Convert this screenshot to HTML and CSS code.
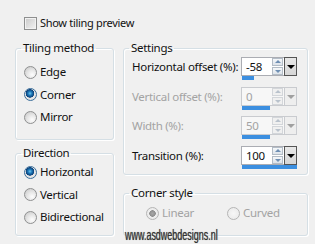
FILE: index.html
```html
<!DOCTYPE html>
<html lang="en">
<head>
    <meta charset="UTF-8">
    <meta name="viewport" content="width=device-width, initial-scale=1.0">
    <title>Tiling settings</title>
    <link rel="stylesheet" href="styles.css">
</head>
<body>
    <div class="dialog">
        <label class="check-row">
            <input type="checkbox" class="check">
            <span>Show tiling preview</span>
        </label>

        <div class="panes">
            <div class="col-left">
                <fieldset class="group group-tiling">
                    <legend>Tiling method</legend>
                    <label class="opt"><input type="radio" name="method" class="radio"><span>Edge</span></label>
                    <label class="opt"><input type="radio" name="method" class="radio" checked><span>Corner</span></label>
                    <label class="opt"><input type="radio" name="method" class="radio"><span>Mirror</span></label>
                </fieldset>

                <fieldset class="group group-direction">
                    <legend>Direction</legend>
                    <label class="opt"><input type="radio" name="direction" class="radio" checked><span>Horizontal</span></label>
                    <label class="opt"><input type="radio" name="direction" class="radio"><span>Vertical</span></label>
                    <label class="opt"><input type="radio" name="direction" class="radio"><span>Bidirectional</span></label>
                </fieldset>
            </div>

            <div class="col-right">
                <fieldset class="group group-settings">
                    <legend>Settings</legend>

                    <div class="setting">
                        <span class="setting-label">Horizontal offset (%):</span>
                        <div class="spin">
                            <div class="spin-field">
                                <span class="spin-value">-58</span>
                                <span class="spin-arrows"><span class="arrow up"></span><span class="arrow down"></span></span>
                                <span class="spin-drop"></span>
                            </div>
                            <div class="spin-track"><div class="spin-fill" style="width: 21%"></div></div>
                        </div>
                    </div>

                    <div class="setting disabled">
                        <span class="setting-label">Vertical offset (%):</span>
                        <div class="spin">
                            <div class="spin-field">
                                <span class="spin-value">0</span>
                                <span class="spin-arrows"><span class="arrow up"></span><span class="arrow down"></span></span>
                                <span class="spin-drop"></span>
                            </div>
                            <div class="spin-track"><div class="spin-fill" style="width: 50%"></div></div>
                        </div>
                    </div>

                    <div class="setting disabled">
                        <span class="setting-label">Width (%):</span>
                        <div class="spin">
                            <div class="spin-field">
                                <span class="spin-value">50</span>
                                <span class="spin-arrows"><span class="arrow up"></span><span class="arrow down"></span></span>
                                <span class="spin-drop"></span>
                            </div>
                            <div class="spin-track"><div class="spin-fill" style="width: 50%"></div></div>
                        </div>
                    </div>

                    <div class="setting">
                        <span class="setting-label">Transition (%):</span>
                        <div class="spin">
                            <div class="spin-field">
                                <span class="spin-value">100</span>
                                <span class="spin-arrows"><span class="arrow up"></span><span class="arrow down"></span></span>
                                <span class="spin-drop"></span>
                            </div>
                            <div class="spin-track"><div class="spin-fill" style="width: 100%"></div></div>
                        </div>
                    </div>
                </fieldset>

                <fieldset class="group group-corner">
                    <legend>Corner style</legend>
                    <div class="corner-opts">
                        <label class="opt disabled"><input type="radio" name="corner" class="radio" checked disabled><span>Linear</span></label>
                        <label class="opt disabled"><input type="radio" name="corner" class="radio" disabled><span>Curved</span></label>
                    </div>
                </fieldset>
            </div>
        </div>

        <div class="watermark">www.asdwebdesigns.nl</div>
    </div>
</body>
</html>
```

FILE: styles.css
```css
body {
    margin: 0;
    padding: 0;
    background-color: #f0f0f0;
    font-family: "Noto Sans", "Open Sans", sans-serif;
    font-size: 11px;
    letter-spacing: -0.3px;
    color: #111;
}

.dialog {
    position: relative;
    height: 244px;
    padding: 16px 7px 0 15px;
    box-sizing: border-box;
}

/* checkbox row */
.check-row {
    display: flex;
    align-items: center;
    gap: 3px;
    height: 14px;
    padding-left: 9px;
    line-height: 14px;
}

.check {
    appearance: none;
    margin: 0;
    width: 13px;
    height: 13px;
    border: 1px solid #8e8f8f;
    box-sizing: border-box;
    background: linear-gradient(135deg, #c9c9c9, #f4f4f4);
    box-shadow: inset 0 0 0 1px #f2f2f2;
}

.panes {
    display: flex;
    gap: 9px;
    margin-top: 11px;
}

.col-left {
    width: 99px;
    display: flex;
    flex-direction: column;
    gap: 6px;
}

.col-right {
    width: 185px;
    display: flex;
    flex-direction: column;
    gap: 11px;
}

/* group boxes */
.group {
    margin: 0;
    min-width: 0;
    box-sizing: border-box;
    border: 1px solid #d5dfe5;
    border-radius: 3px;
    box-shadow: inset 1px 1px 0 #fff, 1px 1px 0 #fff;
    padding: 0 8px;
}

.group legend {
    padding: 0 2px;
    margin-left: -3px;
    line-height: 14px;
    font-size: 11.5px;
    color: #111;
}

.group-tiling {
    height: 99px;
    padding-top: 9px;
    display: flex;
    flex-direction: column;
    gap: 6.5px;
}

.group-direction {
    height: 90px;
    padding-top: 4px;
    display: flex;
    flex-direction: column;
    gap: 6.5px;
}

.group-settings {
    height: 134px;
    padding: 2px 10px 0 8px;
    display: flex;
    flex-direction: column;
    gap: 6.6px;
}

.group-corner {
    height: 50px;
    padding-top: 5px;
}

/* radio options */
.opt {
    display: flex;
    align-items: center;
    gap: 3px;
    height: 16px;
    line-height: 16px;
    font-size: 11.5px;
}

.opt.disabled {
    color: #a3a3a3;
}

.radio {
    appearance: none;
    margin: 0;
    width: 13px;
    height: 13px;
    border-radius: 50%;
    border: 1px solid #8f9091;
    box-sizing: border-box;
    background: radial-gradient(circle at 65% 70%, #fdfdfd 0%, #e6e6e6 45%, #c4c4c4 100%);
}

.radio:checked {
    border-color: #3c6f9b;
    background:
        radial-gradient(circle at 45% 40%, #6fc5ef 0, #1c78b8 2px, #0b3f78 4px, transparent 4.5px),
        radial-gradient(circle, #f4f4f4 0%, #dadada 100%);
}

.radio:disabled {
    border-color: #b5b5b5;
    background: radial-gradient(circle, #f7f7f7 0%, #e8e8e8 100%);
}

.radio:checked:disabled {
    background:
        radial-gradient(circle, #a8a8a8 0, #8f8f8f 3px, transparent 3.5px),
        radial-gradient(circle, #f7f7f7 0%, #e6e6e6 100%);
}

.corner-opts {
    display: grid;
    grid-template-columns: 81px 1fr;
    padding-left: 14px;
}

/* settings rows with spin boxes */
.setting {
    display: flex;
    justify-content: space-between;
    align-items: flex-start;
}

.setting-label {
    line-height: 19px;
    font-size: 11.5px;
}

.setting.disabled .setting-label,
.setting.disabled .spin-value {
    color: #a3a3a3;
}

.spin {
    width: 56px;
}

.spin-field {
    display: flex;
    height: 19px;
}

.spin-value {
    flex: 1;
    display: flex;
    align-items: center;
    padding-left: 4px;
    background: #fff;
    border: 1px solid #abadb3;
    border-right: none;
    font-size: 11.5px;
}

.spin-arrows {
    display: flex;
    flex-direction: column;
    justify-content: center;
    gap: 1px;
    width: 11px;
    background: #fff;
    border-top: 1px solid #abadb3;
    border-bottom: 1px solid #abadb3;
    padding-right: 1px;
}

.arrow {
    position: relative;
    height: 7px;
    border: 1px solid #b3bcc6;
    background: linear-gradient(#f6f8fa, #dde3ea);
}

.arrow::after {
    content: "";
    position: absolute;
    left: 2px;
    top: 1px;
    border-left: 3px solid transparent;
    border-right: 3px solid transparent;
}

.arrow.up::after {
    border-bottom: 3px solid #6f8fb3;
}

.arrow.down::after {
    top: 2px;
    border-top: 3px solid #6f8fb3;
}

.spin-drop {
    position: relative;
    width: 13px;
    border: 1px solid #555;
    box-sizing: border-box;
    background: linear-gradient(#e8e8e8, #d6d6d6);
}

.spin-drop::after {
    content: "";
    position: absolute;
    left: 2px;
    top: 7px;
    border-left: 4px solid transparent;
    border-right: 4px solid transparent;
    border-top: 4px solid #000;
}

.setting.disabled .spin-value,
.setting.disabled .spin-arrows {
    background: #f7f7f7;
    border-color: #c9cbcf;
}

.setting.disabled .arrow {
    border-color: #d3d6da;
    background: #f0f0f0;
}

.setting.disabled .arrow.up::after {
    border-bottom-color: #b9c2cc;
}

.setting.disabled .arrow.down::after {
    border-top-color: #b9c2cc;
}

.setting.disabled .spin-drop {
    border-color: #c9cbcf;
    background: #eeeeee;
}

.setting.disabled .spin-drop::after {
    border-top-color: #a0a0a0;
}

.spin-track {
    height: 4px;
    margin-left: 1px;
}

.spin-fill {
    height: 100%;
    background-color: #3c8fe0;
}

/* watermark stamped over the bottom */
.watermark {
    position: absolute;
    left: 125px;
    top: 227px;
    font-family: "Liberation Sans", Arial, sans-serif;
    font-size: 14px;
    letter-spacing: 0;
    color: #333;
    transform: scaleX(0.64);
    transform-origin: left top;
    text-shadow: 0 0 1px #555, 0 0 3px #fff;
}
```
